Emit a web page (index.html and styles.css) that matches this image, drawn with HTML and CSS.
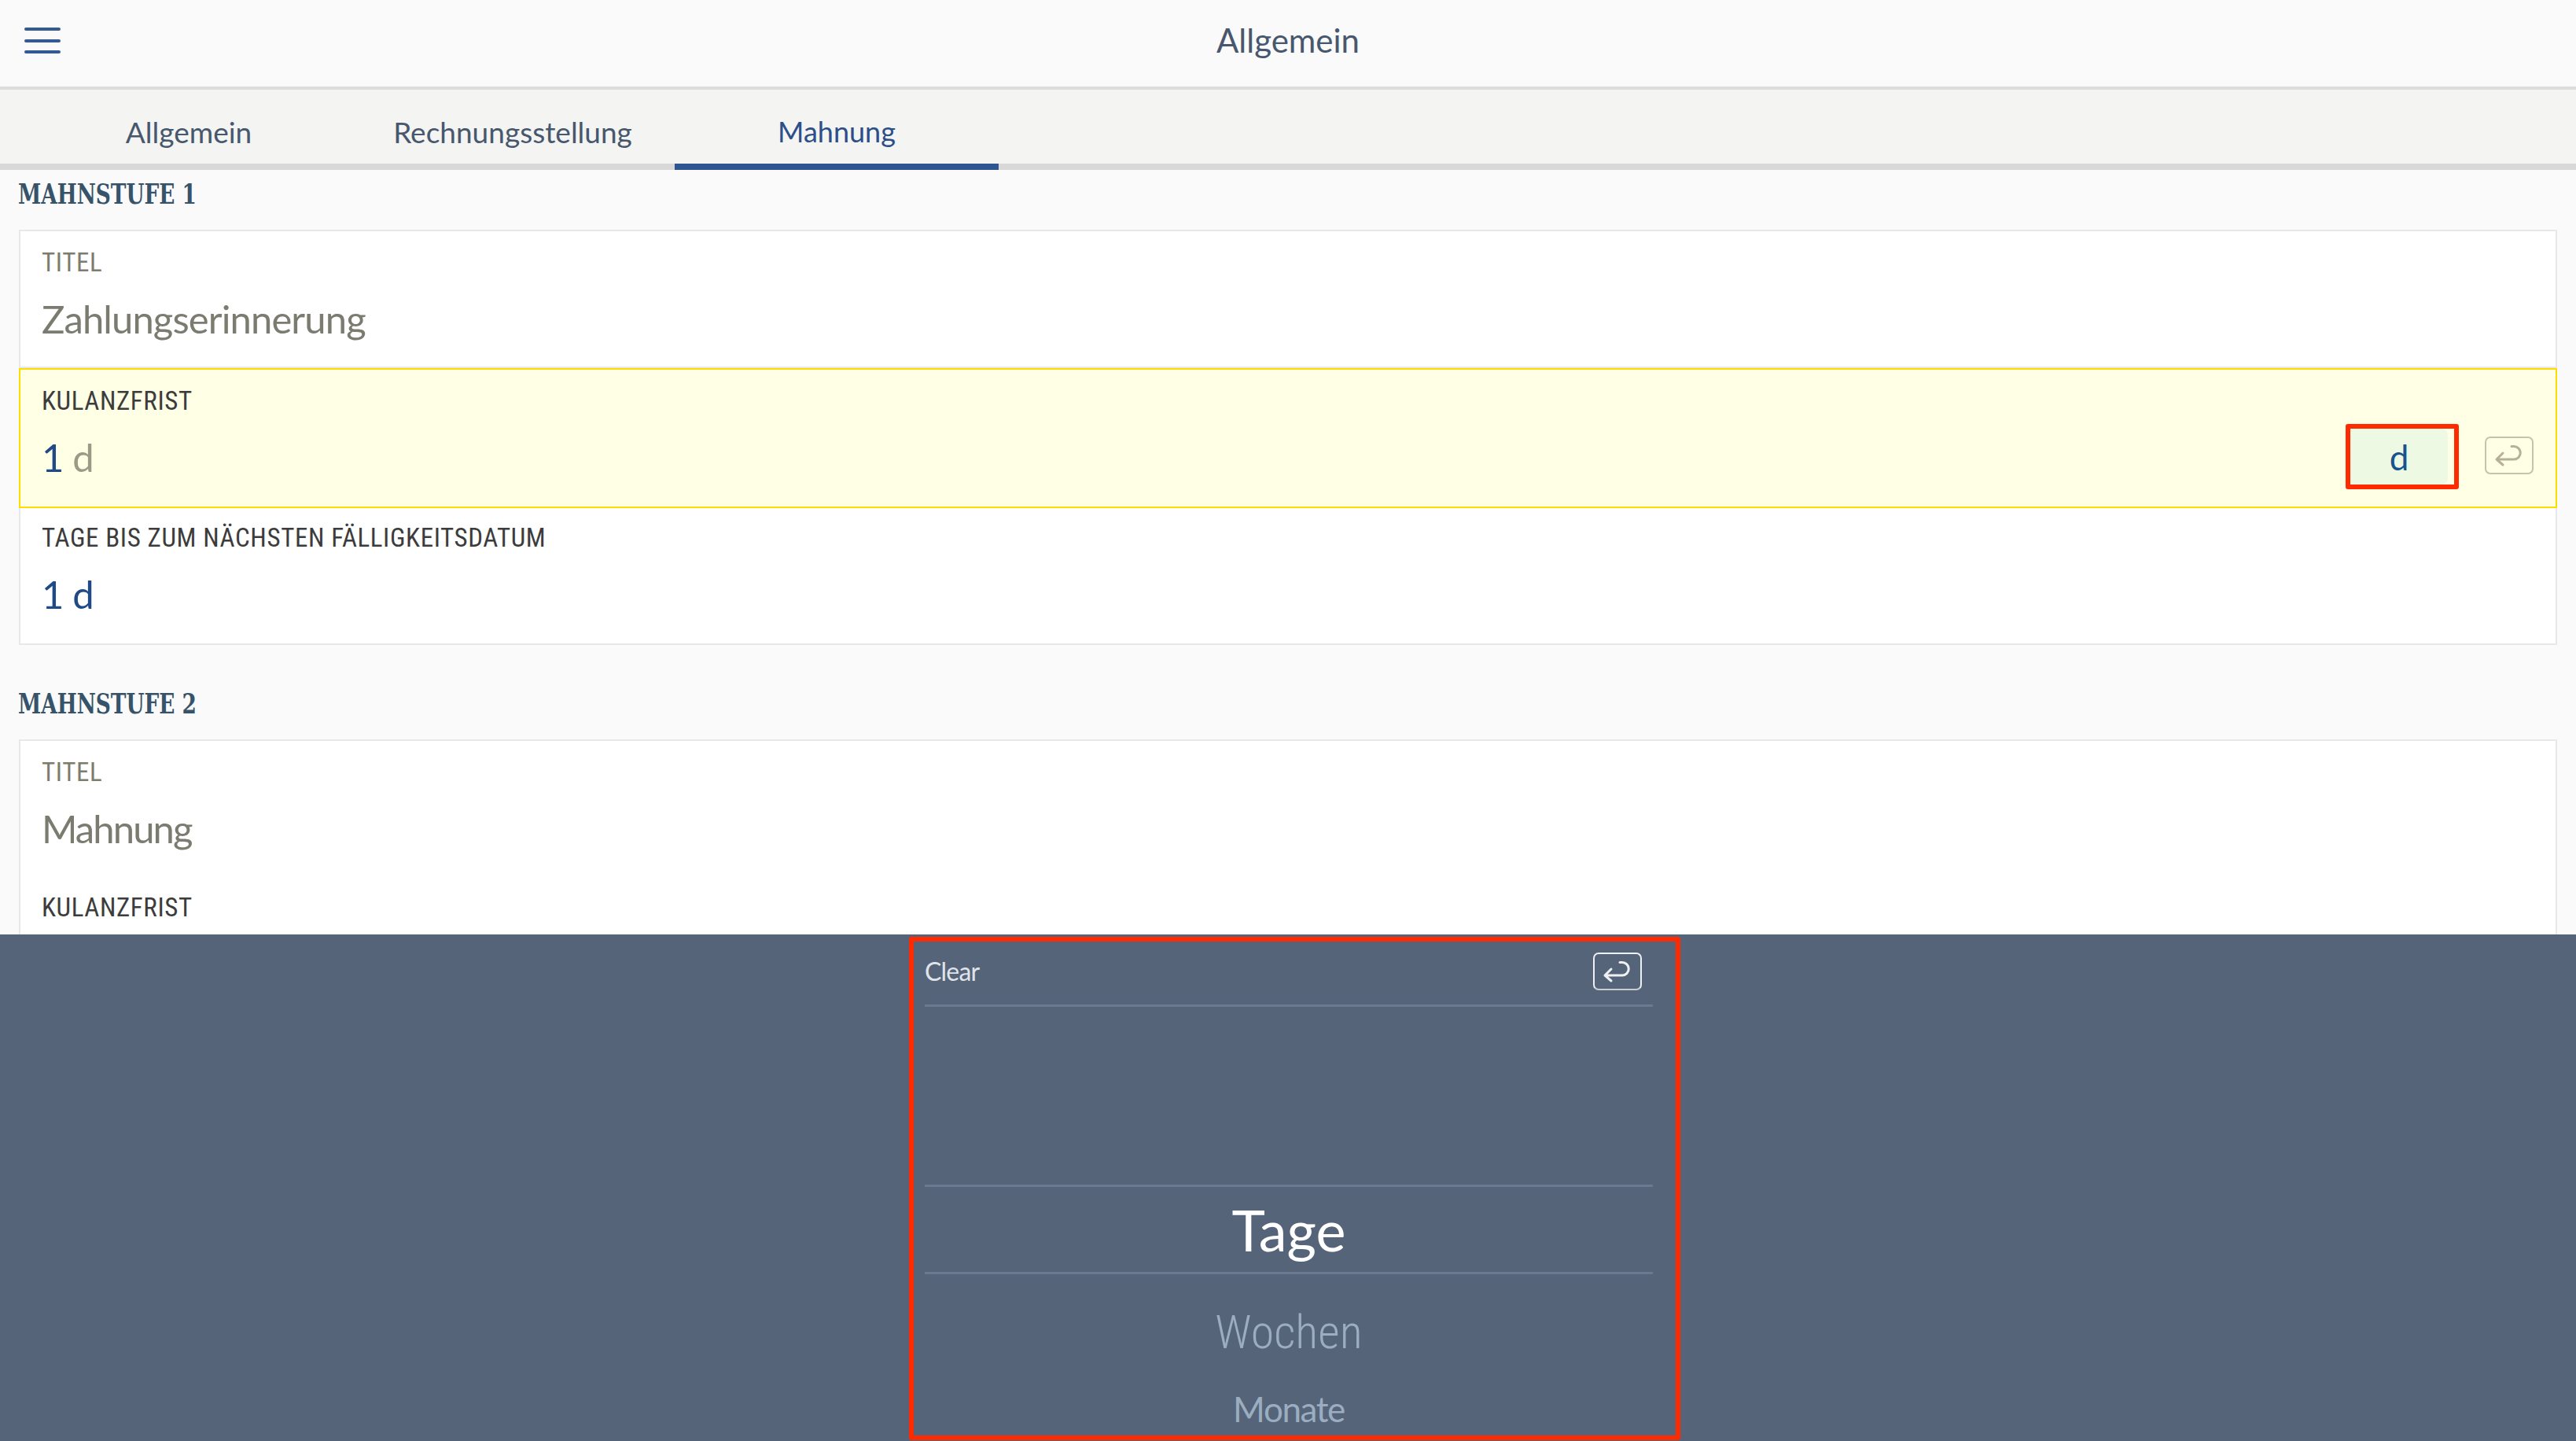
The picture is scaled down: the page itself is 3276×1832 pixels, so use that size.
FILE: index.html
```html
<!DOCTYPE html>
<html lang="de">
<head>
<meta charset="utf-8">
<title>Allgemein</title>
<link rel="stylesheet" href="styles.css">
</head>
<body>
<div class="app">
  <header class="topbar">
    <button class="menu" aria-label="Menü"><span></span><span></span><span></span></button>
    <h1 class="title">Allgemein</h1>
  </header>
  <nav class="tabs">
    <div class="tab">Allgemein</div>
    <div class="tab">Rechnungsstellung</div>
    <div class="tab active">Mahnung</div>
  </nav>
  <main class="content">
    <h2 class="section-title"><span class="section-text">MAHNSTUFE 1</span></h2>
    <div class="card">
      <div class="row">
        <div class="label muted">TITEL</div>
        <div class="value grey">Zahlungserinnerung</div>
      </div>
      <div class="row focused">
        <div class="field">
          <div class="label">KULANZFRIST</div>
          <div class="value"><span class="blue">1</span> <span class="hint">d</span></div>
        </div>
        <div class="unit-box"><div class="unit">d</div></div>
        <div class="enter light">
          <svg viewBox="0 0 62 48" class="enter-icon"><path d="M15 29H37a8.200 8.200 0 0 0 0-16.500H34M23 21L15 29L23 36"/></svg>
        </div>
      </div>
      <div class="row">
        <div class="label">TAGE BIS ZUM NÄCHSTEN FÄLLIGKEITSDATUM</div>
        <div class="value blue">1 d</div>
      </div>
    </div>
    <h2 class="section-title second"><span class="section-text">MAHNSTUFE 2</span></h2>
    <div class="card">
      <div class="row">
        <div class="label muted">TITEL</div>
        <div class="value grey tight">Mahnung</div>
      </div>
      <div class="row">
        <div class="label">KULANZFRIST</div>
      </div>
    </div>
  </main>
  <section class="keyboard">
    <div class="picker">
      <div class="picker-head">
        <span class="clear">Clear</span>
        <div class="enter dark">
          <svg viewBox="0 0 62 48" class="enter-icon"><path d="M15 29H37a8.200 8.200 0 0 0 0-16.500H34M23 21L15 29L23 36"/></svg>
        </div>
      </div>
      <div class="picker-blank"></div>
      <div class="picker-selected">Tage</div>
      <div class="picker-next">Wochen</div>
      <div class="picker-last">Monate</div>
    </div>
  </section>
</div>
</body>
</html>
```
FILE: styles.css
```css
* { box-sizing: border-box; }
html, body { margin: 0; padding: 0; }
body { font-family: Lato, "Liberation Sans", sans-serif; background: #fafafa; }
.app { width: 3276px; height: 1832px; display: flex; flex-direction: column; overflow: hidden; }

.topbar { height: 114px; flex: none; background: #fafafa; border-bottom: 4px solid #dcdcdc; display: flex; align-items: center; justify-content: center; position: relative; padding-bottom: 8px; }
.title { margin: 0; font-size: 42px; font-weight: 400; color: #47586e; }
.menu { position: absolute; left: 31px; top: 35px; width: 46px; height: 33px; padding: 0; border: 0; background: none; display: flex; flex-direction: column; justify-content: space-between; }
.menu span { display: block; height: 4px; border-radius: 2px; background: #345a93; }

.tabs { height: 102px; flex: none; background: #f4f4f2; border-bottom: 8px solid #d8d8d8; padding-left: 34px; display: flex; }
.tab { width: 412px; height: 102px; display: flex; align-items: center; justify-content: center; font-size: 37px; color: #47586e; padding-top: 12px; border-bottom: 8px solid transparent; }
.tab.active { color: #2c4f8a; border-bottom-color: #2f5590; font-size: 36px; }

.content { flex: 1; min-height: 0; overflow: hidden; background: #fafafa; }
.section-title { margin: 0; height: 60px; line-height: 60px; padding-left: 23px; font-family: "DejaVu Serif", "Liberation Serif", serif; font-weight: 700; font-size: 36px; font-stretch: condensed; color: #37536a; }
.section-title.second { margin-top: 44px; }
.section-text { display: inline-block; transform: scaleX(.815); transform-origin: left center; }

.card { margin: 16px 24px 0; background: #fff; border: 2px solid #e8e8e8; }
.row { height: 176px; padding: 20px 0 0 27px; border-bottom: 2px solid #e8e8e8; margin: -2px 0 0; background: #fff; }
.row:first-child { margin-top: 0; height: 174px; }
.row:last-child { border-bottom: 0; height: 174px; }
.row.focused { background: #ffffe6; border: 2px solid #ffdd00; margin: 0 -2px -2px; padding-left: 27px; display: flex; align-items: flex-start; height: 178px; position: relative; }
.field { flex: 1; }
.label { font-family: Roboto, "Liberation Sans", sans-serif; font-stretch: condensed; font-size: 33px; letter-spacing: .6px; line-height: 40px; color: #3c3c3c; }
.label.muted { color: #7e7c6c; }
.value { margin-top: 21px; font-size: 49px; letter-spacing: -.9px; line-height: 60px; }
.value.tight { letter-spacing: -1.9px; }
.grey { color: #7b7b70; }
.blue { color: #1f4a86; }
.hint { color: #9c9a86; }

.unit-box { width: 144px; height: 83px; margin-top: 49px; border: 6px solid #ff2a00; border-radius: 3px; flex: none; }
.unit { width: 124px; height: 71px; background: #eef9e4; border-radius: 0 8px 8px 0; display: flex; align-items: center; justify-content: center; font-size: 44px; color: #16548f; }

.enter { width: 62px; height: 48px; border-radius: 7px; flex: none; }
.enter-icon { display: block; width: 100%; height: 100%; fill: none; stroke-width: 3; stroke-linecap: round; stroke-linejoin: round; }
.enter.light { margin: 65px 28px 0 33px; border: 2px solid #c6c3a8; }
.enter.light .enter-icon { stroke: #b4b09a; margin: -2px; width: 62px; height: 48px; }
.enter.dark { border: 2px solid #eef0f3; border-bottom-color: #c8ccd2; }
.enter.dark .enter-icon { stroke: #eef0f3; margin: -2px; width: 62px; height: 48px; }

.keyboard { height: 644px; flex: none; background: #566479; display: flex; justify-content: center; padding: 3px 0 0 17px; }
.picker { width: 981px; height: 640px; border: 6px solid #ff2a00; border-radius: 3px; padding: 0 29px 0 14px; display: flex; flex-direction: column; overflow: hidden; }
.picker-head { height: 83px; flex: none; border-bottom: 3px solid #6a7a90; display: flex; align-items: flex-start; justify-content: space-between; padding: 14px 14px 0 0; }
.clear { font-size: 32px; letter-spacing: -.8px; line-height: 44px; padding-top: 2px; color: #dfe4ea; }
.picker-blank { height: 229px; flex: none; border-bottom: 3px solid #6a7a90; }
.picker-selected { height: 111px; flex: none; border-bottom: 3px solid #6a7a90; display: flex; align-items: center; justify-content: center; font-size: 72px; color: #fff; }
.picker-next { height: 146px; flex: none; display: flex; align-items: center; justify-content: center; font-family: Roboto, "Liberation Sans", sans-serif; font-stretch: condensed; font-weight: 300; font-size: 60px; color: #9badc0; }
.picker-last { height: 50px; flex: none; display: flex; align-items: center; justify-content: center; font-size: 44px; letter-spacing: -1.4px; line-height: 50px; color: #9badc0; }
```
